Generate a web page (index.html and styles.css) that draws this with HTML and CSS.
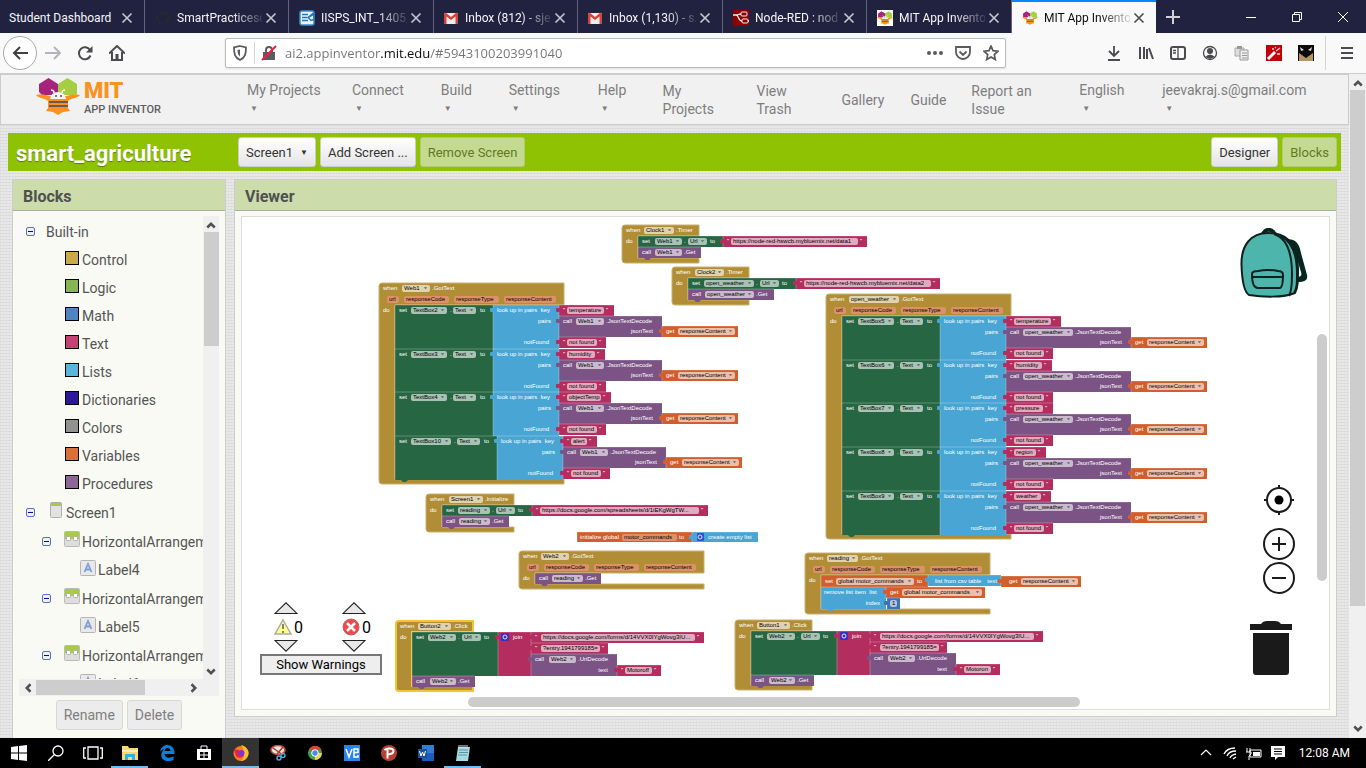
FILE: index.html
```html
<!DOCTYPE html>
<html lang="en">
<head>
<meta charset="utf-8">
<title>MIT App Inventor</title>
<link rel="stylesheet" href="styles.css">
</head>
<body>
<svg class="defs" aria-hidden="true">
  <symbol id="x" viewBox="0 0 12 12"><path d="M1.500 1.500l9 9m0-9l-9 9" fill="none" stroke="currentColor" stroke-width="1.600"/></symbol>
  <symbol id="gmail" viewBox="0 0 14 12"><path d="M0 1h14v11H0z" fill="#eee"/><path d="M0 1.500V12h2.500V4.500L7 8l4.500-3.500V12H14V1.500L12.500 .5 7 5 1.500 .5z" fill="#d54436"/></symbol>
  <symbol id="bee" viewBox="0 0 44 37"><path d="M3 6l9.500-6L22 6v11H6l-3-3z" fill="#a5237c"/><path d="M22 6l9.500-6L41 6v10l-4 1H22z" fill="#a6ce42"/><path d="M0 17c7-2 9 0 14 1h16c5-1 7-3 14-1-3 4-7 2-12 6H12C7 19 3 21 0 17z" fill="#f7931e"/><path d="M12 20h20v10l2 3-7 1-5 3-5-3-7-1 2-3z" fill="#f7931e"/><path d="M13 23h19v2H13zm0 4h19v2H13z" fill="#675b57"/><path d="M14 21a8 7 0 0 1 16 0z" fill="#f4f4f4"/><path d="M18 15q0-3-3-3m11 3q0-3 3-3" fill="none" stroke="#fff" stroke-width="1.500"/><circle cx="20" cy="18" r="1" fill="#555"/><circle cx="25" cy="18" r="1" fill="#555"/></symbol>
  <symbol id="minus" viewBox="0 0 9 9"><rect x=".5" y=".5" width="8" height="8" rx="1.500" fill="#eef1fb" stroke="#5b70bd"/><path d="M2 4.500h5" stroke="#0a0a8c"/></symbol>
  <symbol id="harr" viewBox="0 0 16 16"><rect x=".5" y=".5" width="15" height="15" rx="1" fill="#ddd" stroke="#bbb"/><path d="M1 1h14v7H1z" fill="#a9cb44"/><rect x="2.500" y="5.500" width="4" height="4" rx="1" fill="#fff" stroke="#aaa"/><rect x="9.500" y="5.500" width="4" height="4" rx="1" fill="#fff" stroke="#aaa"/></symbol>
  <symbol id="lab" viewBox="0 0 16 16"><rect x=".5" y=".5" width="15" height="15" rx="1" fill="#e8e8ea" stroke="#b5b5b5"/><path d="M4.500 12L8 4l3.500 8M6 9.500h4" fill="none" stroke="#7d9fd3" stroke-width="1.800"/></symbol>
  <symbol id="up" viewBox="0 0 8 6"><path d="M1 5l3-3 3 3" fill="none" stroke="#505050" stroke-width="2"/></symbol>
</svg>

<header class="tabs">
  <div class="tab"><button class="tab-name">Student Dashboard</button><button class="close" aria-label="Close tab"><svg><use href="#x"/></svg></button></div>
  <div class="tab"><svg class="fav" viewBox="0 0 16 16"><path d="M8 1a7 7 0 0 0-2 13.700V12c-2 .3-2-1-3-1.500 1-.3 1.500 1 2.500 1 .3-.7.500-1 .8-1.200C3 9.500 3.500 5.500 4.500 5l.2-2 2 1h2.600l2-1 .2 2c1.500 1 1.500 4.700-1.800 5.300.3.400.5 1 .5 2v2.400A7 7 0 0 0 8 1z" fill="#24292e"/></svg><button class="tab-name fade">SmartPracticesc</button><button class="close" aria-label="Close tab"><svg><use href="#x"/></svg></button></div>
  <div class="tab"><svg class="fav" viewBox="0 0 16 16"><rect x="1" y="1" width="14" height="14" rx="2" fill="#e9f5fd" stroke="#3b8bc8" stroke-width="1.500"/><path d="M3 4.500h6M3 7.500h5M3 10.500h6m0-3l6-5m-6 5l3 3 3-1V4z" stroke="#2776b8" stroke-width="1.500" fill="none"/></svg><button class="tab-name fade">IISPS_INT_1405_S</button><button class="close" aria-label="Close tab"><svg><use href="#x"/></svg></button></div>
  <div class="tab"><svg class="fav mail"><use href="#gmail"/></svg><button class="tab-name fade">Inbox (812) - sje</button><button class="close" aria-label="Close tab"><svg><use href="#x"/></svg></button></div>
  <div class="tab"><svg class="fav mail"><use href="#gmail"/></svg><button class="tab-name fade">Inbox (1,130) - s.</button><button class="close" aria-label="Close tab"><svg><use href="#x"/></svg></button></div>
  <div class="tab"><svg class="fav" viewBox="0 0 16 16"><path d="M0 0h16v16H0z" fill="#8f0000"/><path d="M0 5h3c3 0 2 6 6 6h7M3 5c3 0 2-1 5-1" fill="none" stroke="#eee" stroke-width="1.300"/><rect x="8" y="2" width="6" height="4" rx="1" fill="none" stroke="#eee"/><rect x="9" y="9" width="6" height="4" rx="1" fill="#8f0000" stroke="#eee"/></svg><button class="tab-name fade">Node-RED : nod</button><button class="close" aria-label="Close tab"><svg><use href="#x"/></svg></button></div>
  <div class="tab"><svg class="fav white"><use href="#bee"/></svg><button class="tab-name fade">MIT App Invento</button><button class="close" aria-label="Close tab"><svg><use href="#x"/></svg></button></div>
  <div class="tab active"><svg class="fav"><use href="#bee"/></svg><button class="tab-name fade">MIT App Invento</button><button class="close" aria-label="Close tab"><svg><use href="#x"/></svg></button></div>
  <button class="new-tab" aria-label="New tab"><svg viewBox="0 0 14 14"><path d="M7 0v14M0 7h14" stroke="#d0d0d8" stroke-width="2"/></svg></button>
  <div class="win">
    <button aria-label="Minimize"><svg viewBox="0 0 10 10"><path d="M0 5.500h10" stroke="#fff"/></svg></button>
    <button aria-label="Restore"><svg viewBox="0 0 10 10"><path d="M.5 2.500h7v7h-7zM2.500 2V.5h7v7H8" fill="none" stroke="#fff"/></svg></button>
    <button aria-label="Close"><svg viewBox="0 0 10 10"><path d="M0 0l10 10M10 0L0 10" stroke="#fff"/></svg></button>
  </div>
</header>

<nav class="toolbar">
  <button class="round" aria-label="Back"><svg viewBox="0 0 16 16"><path d="M8 2L2 8l6 6M2 8h14" fill="none" stroke="#3f3f46" stroke-width="2"/></svg></button>
  <button class="tool" aria-label="Forward"><svg viewBox="0 0 16 16"><path d="M9 2l6 6-6 6M15 8H0" fill="none" stroke="#b5b5b8" stroke-width="2"/></svg></button>
  <button class="tool" aria-label="Reload"><svg viewBox="0 0 16 16"><path d="M13.500 10.500A6 6 0 1 1 13 5" fill="none" stroke="#4a4a4f" stroke-width="2"/><path d="M15.500 1v6.500H9z" fill="#4a4a4f"/></svg></button>
  <button class="tool" aria-label="Home"><svg viewBox="0 0 16 16"><path d="M0 8.500L8 1l8 7.500M3 7v8h10V7" fill="none" stroke="#4a4a4f" stroke-width="2"/><path d="M6.500 9h3v6h-3z" fill="#4a4a4f"/></svg></button>
  <div class="url">
    <svg viewBox="0 0 16 16"><path d="M8 1l6 1.500C14 9 13 13 8 15 3 13 2 9 2 2.500z" fill="none" stroke="#5a5a60" stroke-width="1.800"/><path d="M8 4.500v7C6 10 5.500 8 5.500 5z" fill="#5a5a60"/></svg>
    <i class="sep"></i>
    <svg viewBox="0 0 16 16"><path d="M2 7h12v8H2z" fill="#5a5a60"/><path d="M5 8V5a3 3 0 0 1 6 0v3" fill="none" stroke="#5a5a60" stroke-width="2"/><path d="M1 15L15 1" stroke="#ff1744" stroke-width="2"/></svg>
    <input type="text" aria-label="Address" value="ai2.appinventor.mit.edu/#5943100203991040">
    <button aria-label="Page actions"><svg viewBox="0 0 16 16"><circle cx="2" cy="8" r="2"/><circle cx="8" cy="8" r="2"/><circle cx="14" cy="8" r="2"/></svg></button>
    <button aria-label="Save to Pocket"><svg viewBox="0 0 16 16"><path d="M1 2h14v5a7 7 0 0 1-14 0zM4.500 6.500L8 10l3.500-3.500" fill="none" stroke="#5a5a60" stroke-width="1.800"/></svg></button>
    <button aria-label="Bookmark"><svg viewBox="0 0 16 16"><path d="M8 1l2 4.700 5 .5-3.700 3.400 1 5L8 12l-4.300 2.600 1-5L1 6.200l5-.5z" fill="none" stroke="#5a5a60" stroke-width="1.700"/></svg></button>
  </div>
  <div class="tools">
    <button class="tool" aria-label="Downloads"><svg viewBox="0 0 16 16"><path d="M8 1v10M3 6l5 5 5-5M2 15h12" fill="none" stroke="#4a4a4f" stroke-width="1.800"/></svg></button>
    <button class="tool" aria-label="Library"><svg viewBox="0 0 16 16"><path d="M2 2v12M6 2v12M9 4v10M11 3l4 11" fill="none" stroke="#4a4a4f" stroke-width="2"/></svg></button>
    <button class="tool" aria-label="Sidebars"><svg viewBox="0 0 16 16"><rect x="1" y="2" width="14" height="12" rx="2" fill="none" stroke="#4a4a4f" stroke-width="2"/><path d="M8 2v12M3 5.500h3M3 8h3" stroke="#4a4a4f" stroke-width="1.300"/></svg></button>
    <button class="tool" aria-label="Account"><svg viewBox="0 0 16 16"><circle cx="8" cy="8" r="6.500" fill="none" stroke="#4a4a4f" stroke-width="1.300"/><circle cx="8" cy="6" r="3"/><path d="M3 12q5-5 10 0l-5 2z"/></svg></button>
    <button class="tool" aria-label="Copy"><svg viewBox="0 0 16 16"><path d="M1 3h9v8H1z" fill="#ddd" stroke="#aaa"/><path d="M3 1h5v3H3z" fill="#999"/><path d="M6 5h8v10H6z" fill="#eee" stroke="#999"/><path d="M8 8h5M8 10.500h5M8 13h5" stroke="#999"/></svg></button>
    <button class="tool" aria-label="Wand"><svg viewBox="0 0 16 16"><path d="M0 0h16v16H0z" fill="#c4000a"/><path d="M2 14l7-7" stroke="#fff" stroke-width="3"/><path d="M10 6l4-3M6 4h2m3 5h3M9 3l1-1" stroke="#fcc" stroke-width="1.300"/></svg></button>
    <button class="tool" aria-label="Mask"><svg viewBox="0 0 16 16"><path d="M0 0h16v16H0z" fill="#0b0b0d"/><path d="M1 8l7 5 7-5v8H1z" fill="#b59463"/><path d="M2 2l4 3-3 1zm12 0l-4 3 3 1z" fill="#ddd"/></svg></button>
    <i class="sep tall"></i>
    <button class="tool" aria-label="Menu"><svg viewBox="0 0 16 16"><path d="M2 3h12M2 8h12M2 13h12" stroke="#4a4a4f" stroke-width="2"/></svg></button>
  </div>
</nav>

<main class="browser-view">
  <div class="page">
    <div class="topbar">
      <a href="#" class="logo"><svg viewBox="0 0 44 37"><use href="#bee"/></svg><span class="logo-text"><b>MIT</b><span>APP INVENTOR</span></span></a>
      <div class="menu">
        <button>My Projects<i>▼</i></button><button>Connect<i>▼</i></button><button>Build<i>▼</i></button><button>Settings<i>▼</i></button><button>Help<i>▼</i></button>
        <a href="#">My<br>Projects</a><a href="#">View<br>Trash</a><a href="#">Gallery</a><a href="#">Guide</a><a href="#">Report an<br>Issue</a>
        <button>English<i>▼</i></button><button>jeevakraj.s@gmail.com<i>▼</i></button>
      </div>
    </div>
    <div class="project-bar">
      <h1>smart_agriculture</h1>
      <div class="group"><button class="btn">Screen1 <i>▼</i></button><button class="btn">Add Screen ...</button><button class="btn off" disabled>Remove Screen</button></div>
      <div class="group end"><button class="btn">Designer</button><button class="btn off" disabled>Blocks</button></div>
    </div>
    <div class="columns">
      <section class="panel side">
        <h2>Blocks</h2>
        <div class="tree-wrap">
          <ul class="tree">
            <li class="root"><svg class="tog"><use href="#minus"/></svg>Built-in</li>
            <li class="leaf"><i class="sw control"></i>Control</li>
            <li class="leaf"><i class="sw logic"></i>Logic</li>
            <li class="leaf"><i class="sw math"></i>Math</li>
            <li class="leaf"><i class="sw text"></i>Text</li>
            <li class="leaf"><i class="sw lists"></i>Lists</li>
            <li class="leaf"><i class="sw dict"></i>Dictionaries</li>
            <li class="leaf"><i class="sw colors"></i>Colors</li>
            <li class="leaf"><i class="sw vars"></i>Variables</li>
            <li class="leaf"><i class="sw procs"></i>Procedures</li>
            <li class="root scr"><svg class="tog"><use href="#minus"/></svg><svg class="phone" viewBox="0 0 12 16"><rect x=".5" y=".5" width="11" height="15" rx="1" fill="#e2e2e2" stroke="#b0b0b0"/><path d="M1 1h10v3H1z" fill="#a9cb44"/></svg>Screen1</li>
            <li class="branch"><svg class="tog"><use href="#minus"/></svg><svg class="ico"><use href="#harr"/></svg>HorizontalArrangement1</li>
            <li class="sub"><svg class="ico"><use href="#lab"/></svg>Label4</li>
            <li class="branch"><svg class="tog"><use href="#minus"/></svg><svg class="ico"><use href="#harr"/></svg>HorizontalArrangement2</li>
            <li class="sub"><svg class="ico"><use href="#lab"/></svg>Label5</li>
            <li class="branch"><svg class="tog"><use href="#minus"/></svg><svg class="ico"><use href="#harr"/></svg>HorizontalArrangement3</li>
            <li class="sub"><svg class="ico"><use href="#lab"/></svg>Label6</li>
          </ul>
          <div class="vbar"><svg><use href="#up"/></svg><i></i><svg class="down"><use href="#up"/></svg></div>
          <div class="hbar"><svg class="left"><use href="#up"/></svg><i></i><svg class="right"><use href="#up"/></svg></div>
        </div>
        <div class="actions"><button class="btn dim" disabled>Rename</button><button class="btn dim" disabled>Delete</button></div>
      </section>
      <section class="panel viewer">
        <h2>Viewer</h2>
        <div class="workspace">
          <svg class="canvas" id="canvas" role="img" aria-label="Blocks workspace"></svg>
          <div class="warnings">
            <div class="counts">
              <div class="count"><svg class="tri" viewBox="0 0 22 11"><path d="M1 10.500L11 .8l10 9.700z" fill="#e8e8e8" stroke="#222"/></svg><span><svg viewBox="0 0 18 18"><path d="M9 2l8 14H1z" fill="#ffff88" stroke="#aaa" stroke-width="1.500"/><path d="M9 6v5m0 2v2" stroke="#777" stroke-width="1.800"/></svg>0</span><svg class="tri" viewBox="0 0 22 11"><path d="M1 .5l10 9.700L21 .5z" fill="#e8e8e8" stroke="#222"/></svg></div>
              <div class="count"><svg class="tri" viewBox="0 0 22 11"><path d="M1 10.500L11 .8l10 9.700z" fill="#e8e8e8" stroke="#222"/></svg><span><svg viewBox="0 0 18 18"><circle cx="9" cy="9" r="8" fill="#f0484c" stroke="#b66" /><path d="M5 5l8 8m0-8l-8 8" stroke="#fff" stroke-width="2.500"/></svg>0</span><svg class="tri" viewBox="0 0 22 11"><path d="M1 .5l10 9.700L21 .5z" fill="#e8e8e8" stroke="#222"/></svg></div>
            </div>
            <button class="show">Show Warnings</button>
          </div>
          <svg class="backpack" viewBox="0 0 68 70"><path d="M46 11c10 0 13 4 15 14l6 22c1 5-2 7-9 7l-1-5c4 0 5-1 4-5l-6-20c-1-4-4-7-8-7z" fill="#03291f"/><path d="M23 7c1-7 11-7 12 1" fill="none" stroke="#03291f" stroke-width="4"/><path d="M1.500 37C1 17 11 5 28 5c15 0 29 6 30 35 0 13 0 20-3 25-12 5-33 4-46 2-5-3-7-15-7.500-30z" fill="#4db5ab" stroke="#10201e" stroke-width="2"/><path d="M34 6c16 5 18 25 18 40 0 9 0 17-3 22M41 8c12 6 16 22 16 38 0 9 0 14-3 19" fill="none" stroke="#10201e" stroke-width="2"/><path d="M12 46q0-3 6-3 10-2 20 0 5 0 5 4 0 12-3 13H18c-4 0-6-4-6-14zm1 3h30" fill="none" stroke="#10201e" stroke-width="2"/></svg>
          <div class="controls">
            <button aria-label="Center workspace"><svg viewBox="0 0 32 32"><circle cx="16" cy="16" r="12" fill="none" stroke="#1a1a1a" stroke-width="2"/><circle cx="16" cy="16" r="4.500"/><path d="M16 1v4m0 22v4M1 16h4m22 0h4" stroke="#1a1a1a" stroke-width="2"/></svg></button>
            <button aria-label="Zoom in"><svg viewBox="0 0 32 32"><circle cx="16" cy="16" r="15" fill="none" stroke="#1a1a1a" stroke-width="2"/><path d="M9 16h14M16 9v14" stroke="#1a1a1a" stroke-width="2"/></svg></button>
            <button aria-label="Zoom out"><svg viewBox="0 0 32 32"><circle cx="16" cy="16" r="15" fill="none" stroke="#1a1a1a" stroke-width="2"/><path d="M9 16h14" stroke="#1a1a1a" stroke-width="2"/></svg></button>
          </div>
          <svg class="trash" viewBox="0 0 42 54"><path d="M0 3h11q2-3 6-3h8q4 0 6 3h11v6H0zM3 12h36v39q0 3-3 3H6q-3 0-3-3z" fill="#1a1a1a"/></svg>
          <i class="ws-v"></i><i class="ws-h"></i>
        </div>
      </section>
    </div>
  </div>
  <div class="vbar main"><svg><use href="#up"/></svg><i></i><svg class="down"><use href="#up"/></svg></div>
</main>

<footer class="taskbar">
  <button aria-label="Start"><svg viewBox="0 0 16 16"><path d="M0 2l7-1v6.500H0zm8-1l8-1v7.500H8zM0 8.500h7V15l-7-1zm8 0h8V16l-8-1z" fill="#fff"/></svg></button>
  <button aria-label="Search"><svg viewBox="0 0 16 16"><circle cx="10" cy="6" r="5" fill="none" stroke="#fff" stroke-width="1.300"/><path d="M6.500 9.500L0 16" stroke="#fff" stroke-width="1.300"/></svg></button>
  <button aria-label="Task view"><svg class="wide" viewBox="0 0 20 16"><path d="M5 2h10v12H5zM3 3H.7v10H3m14-10h2.300v10H17" fill="none" stroke="#fff" stroke-width="1.300"/></svg></button>
  <button class="open" aria-label="File Explorer"><svg viewBox="0 0 16 16"><path d="M0 1h6l1 2h9v12H0z" fill="#fbd872"/><path d="M0 5h16v2H0z" fill="#fff0b0"/><path d="M3 9h10v6h-3v-3H6v3H3z" fill="#27b3ee"/></svg></button>
  <button aria-label="Edge"><svg viewBox="0 0 16 16"><path d="M1 7C2 2 5 0 8 0c5 0 8 4 7.500 9H5.500c.5 4 5 4.500 9 2.500V15C7 18 1 14 2.500 8.500 3 6 5 4 7 4 4 4 2 5 1 7zm4.500-1h6c0-4-5.500-4-6 0z" fill="#0a7fdb"/></svg></button>
  <button aria-label="Store"><svg viewBox="0 0 16 16"><path d="M1 4h14v11H1z" fill="#fff"/><path d="M5 4V1h6v3" fill="none" stroke="#fff"/><path d="M4 7h3.500v2.500H4zm4.500 0H12v2.500H8.500zM4 10.500h3.500V13H4zm4.500 0H12V13H8.500z"/></svg></button>
  <button class="open current" aria-label="Firefox"><svg viewBox="0 0 16 16"><circle cx="8" cy="8.500" r="7.500" fill="#ff7a1a"/><path d="M8 0c5 1 8 5 7.500 9-1 5-5 7-8 7 4-2 4-6 2-9 2-2 0-5-1.500-7z" fill="#ffbd2e"/><path d="M1 5c3-1 5 0 6 1l4 3c0 4-6 5-8 2z" fill="#e3224e"/><circle cx="8.500" cy="8" r="3" fill="#7a36d2"/></svg></button>
  <button aria-label="Snipping Tool"><svg viewBox="0 0 16 16"><ellipse cx="8" cy="5" rx="7" ry="4.500" fill="#e6e6e6" stroke="#c54d34" stroke-width="1.600"/><path d="M3 3l10 7M13 2L7 9" stroke="#b53926" stroke-width="1.500"/><circle cx="9" cy="13" r="2" fill="none" stroke="#55a9df" stroke-width="1.400"/><circle cx="13" cy="10.500" r="2" fill="none" stroke="#55a9df" stroke-width="1.400"/></svg></button>
  <button aria-label="Chrome"><svg viewBox="0 0 16 16"><circle cx="8" cy="8" r="7" fill="#3ca553"/><path d="M8 8L2 4.500a7 7 0 0 1 12.500.5H8z" fill="#e04435"/><path d="M8 8h6.800A7 7 0 0 1 8 15z" fill="#fbd14a"/><circle cx="8" cy="8" r="3.300" fill="#4a86e8" stroke="#fff"/></svg></button>
  <button aria-label="Viewer"><svg viewBox="0 0 16 16"><path d="M0 0h16v16H0z" fill="#2a84ea"/><path d="M2 4l3 8 3-8M9.500 7.500H14V4h-4v8h4v-2" fill="none" stroke="#fff" stroke-width="1.500"/></svg></button>
  <button aria-label="Publisher"><svg viewBox="0 0 16 16"><circle cx="8" cy="8" r="8" fill="#b8422f"/><path d="M6.500 13.500V4M3.500 5c2-2 9-2.500 9 1 0 3-4 3.500-6 3" fill="none" stroke="#fff" stroke-width="2"/></svg></button>
  <button aria-label="Word"><svg viewBox="0 0 16 16"><path d="M4 0h12v16H4z" fill="#2f7fd6"/><path d="M4 8h12v8H4z" fill="#1b5cbe"/><path d="M0 4h9v9H0z" fill="#1c4f9f"/><path d="M1.500 6l1.500 5 1.500-4L6 11l1.500-5" fill="none" stroke="#fff"/></svg></button>
  <button class="open" aria-label="Notepad"><svg viewBox="0 0 16 16"><path d="M3 2h12l-2 14H1z" fill="#a7dbe3"/><path d="M4 5h9M4 7.500h9M3 10h9" stroke="#5b95a5"/><path d="M4 0v3m2-3v3m2-3v3m2-3v3m2-3v3" stroke="#ddd"/></svg></button>
  <div class="tray">
    <svg viewBox="0 0 16 16"><path d="M3 10l5-5 5 5" fill="none" stroke="#fff" stroke-width="1.200"/></svg>
    <svg viewBox="0 0 16 16"><path d="M2 9q3-6 11-6M5 11q2-5 9-5M8 13q1-3 6-4M11 14l3-2" fill="none" stroke="#fff" stroke-width="1.300"/></svg>
    <svg viewBox="0 0 16 16"><path d="M4 5h11v7H4z" fill="none" stroke="#fff"/><path d="M7 7h7v4H7z" fill="#fff"/><path d="M1 3v4m3-4v4M0 7h5v2L3 11v4" fill="none" stroke="#fff"/></svg>
    <svg viewBox="0 0 16 16"><path d="M1 1h14v11H8l-3 3v-3H1z" fill="#fff"/><path d="M4 4h8M4 6.500h8M4 9h8" stroke="#000"/></svg>
    <time>12:08 AM</time>
  </div>
</footer>
<script src="blocks.js"></script>
</body>
</html>
```
FILE: styles.css
```css
* { box-sizing: border-box; }
html, body { height: 100%; margin: 0; }
body { display: flex; flex-direction: column; overflow: hidden; font-family: Roboto, "Liberation Sans", sans-serif; background: #e9e9e9; }
button { border: 0; padding: 0; margin: 0; background: none; font: inherit; color: inherit; display: flex; align-items: center; justify-content: center; }
a { color: inherit; text-decoration: none; }
i { font-style: normal; }
svg { display: block; flex: none; }
.defs { display: none; }

.tabs { display: flex; flex: none; height: 33px; background: #20223f; color: #f5f5fa; font: 12px Roboto, "Noto Sans", sans-serif; }
.tab { display: flex; align-items: center; flex: 0 1 144px; min-width: 0; height: 33px; padding: 2px 10px 0 9px; border-right: 1px solid #62647c; }
.tab:nth-child(2n+1) { flex-basis: 145px; }
.tab .fav { width: 16px; height: 16px; margin: 0 6px 0 1px; }
.tab .mail { width: 14px; height: 12px; margin-right: 7px; }
.tab .white { background: #fff; }
.tab-name { flex: 1; min-width: 0; white-space: nowrap; justify-content: flex-start; }
.fade { -webkit-mask-image: linear-gradient(90deg, #000 65%, transparent 105%); mask-image: linear-gradient(90deg, #000 65%, transparent 105%); }
.close { width: 14px; height: 14px; color: #c8c8d2; margin-left: 2px; }
.close svg { width: 12px; height: 12px; }
.tab.active { background: #f9f9fa; color: #0c0c0d; border: 0; border-top: 2px solid #0a84ff; padding-top: 0; }
.active .close { color: #4a4a4f; }
.new-tab { width: 34px; }
.new-tab svg { width: 14px; height: 14px; }
.win { display: flex; margin-left: auto; }
.win button { width: 46px; }
.win svg { width: 10px; height: 10px; }

.toolbar { display: flex; align-items: center; flex: none; height: 41px; padding: 0 3px; background: #f9f9fa; border-bottom: 1px solid #ccc; }
.round { width: 34px; height: 34px; border: 1px solid #aaa; border-radius: 50%; background: #fff; }
.toolbar svg { width: 16px; height: 16px; }
.tool { width: 32px; height: 32px; fill: #4a4a4f; }
.url { display: flex; align-items: center; gap: 12px; flex: 0 1 781px; height: 30px; margin-left: 92px; padding: 0 6px; border: 1px solid #bbb; border-radius: 2px; background: #fff; box-shadow: 0 1px 2px #ddd; fill: #5a5a60; }
.url .sep { margin: 0 -6px; }
.sep { width: 1px; height: 22px; background: #d4d4d6; }
.url input { flex: 1; min-width: 0; border: 0; padding: 0; margin-left: -4px; outline: 0; font: 13px/20px "Open Sans", "Noto Sans", sans-serif; color: transparent; background: linear-gradient(90deg, #737373 95px, #0c0c0d 95px 145px, #737373 145px); -webkit-background-clip: text; background-clip: text; }
.tools { display: flex; align-items: center; margin-left: auto; }
.tall { height: 34px; margin: 0 5px 0 3px; }

.browser-view { display: flex; flex: 1; min-height: 0; }
.page { display: flex; flex-direction: column; flex: 1; min-width: 0; background-color: #e9e9e9; background-image: repeating-linear-gradient(0deg, #dcdcdc 0 1px, transparent 1px 3px), repeating-linear-gradient(90deg, #e2e2e2 0 1px, transparent 1px 3px); }
.topbar { display: flex; flex: none; height: 51px; border: 1px solid #ccc; background: #f1f1f1; color: #7e7e7e; }
.logo { display: flex; gap: 4px; flex: none; width: 246px; padding: 3px 0 0 35px; }
.logo svg { width: 44px; height: 37px; }
.logo-text { display: flex; flex-direction: column; font: 500 11px/14px Roboto, sans-serif; color: #5e5e5e; padding-top: 1px; }
.logo-text b { font: 900 22px/24px Roboto, sans-serif; color: #f7931e; }
.menu { display: grid; flex: 1; grid-template-columns: 105fr 89fr 68fr 89fr 65fr 94fr 85fr 69fr 61fr 108fr 83fr 186fr; font-size: 14px; line-height: 18px; align-items: center; }
.menu button { display: block; text-align: left; white-space: nowrap; }
.menu button i { display: block; font-size: 8px; padding-left: 3px; line-height: 20px; }

.project-bar { display: flex; align-items: center; flex: none; height: 38px; margin: 8px 8px 0; padding: 0 4px 0 8px; background: #8fc202; }
h1 { margin: 4px 0 0; width: 222px; font-size: 22px; line-height: 26px; color: #fff; text-shadow: 0 1px 1px #5c7a10; }
.group { display: flex; gap: 4px; }
.end { margin-left: auto; }
.btn { height: 30px; padding: 0 7px; border: 1px solid #ccc; border-radius: 3px; background: linear-gradient(#fff, #e4e4e4); color: #333; font-size: 13px; white-space: nowrap; }
.btn i { font-size: 8px; margin-left: 7px; }
.btn.off { background: #c5da91; border-color: #b3cc74; color: #5f7a22; }
.btn.dim { background: #ececec; border-color: #d8d8d8; color: #7f7f7f; font-size: 14px; }

.columns { display: flex; align-items: flex-start; gap: 8px; flex: 1; min-height: 0; padding: 8px 12px 0; }
.panel { display: flex; flex-direction: column; background: #f8faf3; border: 1px solid #ccc; }
h2 { flex: none; margin: 0; height: 31px; padding: 2px 10px 0; font-size: 16px; line-height: 29px; color: #505050; background: #ccdcaa; border-bottom: 1px solid #aaa; }
.side { flex: none; width: 214px; height: calc(100% + 10px); }
.viewer { flex: 1; min-width: 0; height: calc(100% - 21px); }
.tree-wrap { display: grid; grid-template: 463px 17px / 184px 16px; margin: 5px 6px 0; }
.tree { margin: 0; padding: 1px 0 0; overflow: hidden; list-style: none; font-size: 14px; color: #555; }
.tree li { display: flex; align-items: center; height: 28px; white-space: nowrap; }
.tree .root { padding-left: 7px; height: 29px; }
.tree .leaf { padding-left: 46px; }
.tree .branch { padding-left: 23px; height: 29px; }
.tree .sub { padding-left: 61px; }
.tog { width: 9px; height: 9px; margin-right: 11px; }
.root.scr .tog { margin-right: 15px; }
.branch .tog { margin-right: 13px; }
.phone { width: 12px; height: 16px; margin: 0 4px 5px 0; }
.ico { width: 16px; height: 16px; margin: 0 2px 5px 0; }
.sw { width: 14px; height: 14px; border: 1px solid #000; margin: 0 3px 5px 0; }
.control { background: #cdaa49; } .logic { background: #88b554; } .math { background: #4f85c2; } .text { background: #c44370; } .lists { background: #5bb4dc; } .dict { background: #2d1799; } .colors { background: #929292; } .vars { background: #d97139; } .procs { background: #8c6798; }
.vbar, .hbar { display: flex; align-items: center; background: #f0f0f0; }
.vbar { flex-direction: column; grid-row: span 2; width: 17px; padding: 5px 0; }
.vbar svg, .hbar svg { width: 10px; height: 8px; }
.vbar i { width: 15px; height: 114px; background: #cdcdcd; margin-top: 3px; }
.tree-wrap .vbar { width: 16px; }
.vbar .down { transform: rotate(180deg); margin-top: auto; margin-bottom: 15px; }
.hbar { padding: 0 4px; }
.hbar i { width: 109px; height: 15px; background: #cdcdcd; margin-left: 3px; }
.hbar .left { transform: rotate(-90deg); }
.hbar .right { transform: rotate(90deg); margin-left: auto; }
.vbar.main { flex: none; }
.vbar.main i { height: 516px; }
.vbar.main .down { margin-bottom: 0; }
.actions { display: flex; justify-content: center; gap: 4px; margin: 4px 0 0; }

.workspace { position: relative; flex: 1; margin: 5px 6px 6px; border: 1px solid #ddd; background: #fff; overflow: hidden; }
.canvas { width: 100%; height: 100%; font: 6px "Liberation Sans", sans-serif; }
.canvas text { white-space: pre; stroke-width: 0; }
.canvas .lb { fill: #fff; }
.canvas .fd { fill: #000; }
.warnings { position: absolute; left: 18px; bottom: 34px; width: 122px; }
.counts { display: flex; justify-content: space-between; padding: 0 11px 0 14px; }
.count { display: flex; flex-direction: column; }
.count span { display: flex; align-items: center; gap: 2px; height: 26px; font-size: 16px; color: #000; }
.count span svg { width: 18px; height: 18px; }
.tri { width: 24px; height: 12px; }
.show { width: 100%; height: 21px; border: 2px solid #777; background: #eee; color: #000; font-size: 13px; margin-top: 2px; }
.backpack { position: absolute; right: 21px; top: 11px; width: 68px; height: 70px; }
.controls { position: absolute; right: 34px; bottom: 115px; display: flex; flex-direction: column; gap: 2px; }
.controls button:first-child { margin-bottom: 10px; }
.controls svg { width: 32px; height: 32px; }
.trash { position: absolute; right: 37px; bottom: 34px; width: 42px; height: 54px; }
.ws-v { position: absolute; right: 2px; top: 117px; width: 10px; height: 247px; border-radius: 5px; background: #ccc; }
.ws-h { position: absolute; left: 226px; bottom: 2px; width: 612px; height: 10px; border-radius: 5px; background: #ccc; }

.taskbar { display: flex; flex: none; height: 30px; background: #000; color: #fff; }
.taskbar button { width: 37px; }
.taskbar > button svg { width: 16px; height: 16px; }
.taskbar > button .wide { width: 20px; }
.taskbar .open { box-shadow: inset 0 -2px #76b9ed; }
.taskbar .current { background: #333; }
.tray { display: flex; align-items: center; gap: 8px; margin-left: auto; padding-right: 16px; }
.tray svg { width: 16px; height: 16px; }
.tray time { margin-left: 5px; font: 12px Roboto, sans-serif; white-space: nowrap; }
```
FILE: blocks.js
```js
// Draws the block stacks. Coordinates are in workspace units; `scroll` is the current pan.
const NS = 'http://www.w3.org/2000/svg';
const scroll = { x: 242, y: 217 };
const GOLD = '#b18e35', GREEN = '#266643', BLUE = '#49a6d4', PINK = '#b32d5e', PURPLE = '#7c5385', ORANGE = '#d05f2d', NUM = '#3f71b5';
const TINT = { [GOLD]: '#e0d2ae', [GREEN]: '#a8c2b4', [PINK]: '#e0abbf', [PURPLE]: '#cbbace', [ORANGE]: '#ecbfab', [NUM]: '#b2c6e1' };

const root = document.getElementById('canvas').appendChild(document.createElementNS(NS, 'g'));
root.setAttribute('transform', `translate(${-scroll.x} ${-scroll.y})`);

function el(name, attrs, text) {
  const node = document.createElementNS(NS, name);
  for (const key in attrs) node.setAttribute(key, attrs[key]);
  if (text) node.textContent = text;
  return root.appendChild(node);
}
const label = (text, x, y, anchor = 'start') => el('text', { x, y: y + 2, class: 'lb', 'text-anchor': anchor }, text);
function field(text, x, end, y, color, arrow = true) {
  el('rect', { x, y: y - 3, width: end - x, height: 7, rx: 2, fill: color });
  el('text', { x: x + 2, y: y + 2, class: 'fd' }, text);
  if (arrow) el('path', { d: `M${end - 6} ${y - 1}h3l-1 2h-1z`, fill: '#444', 'fill-opacity': .6 });
}
function shape(x, y, end, bottom, color) {
  el('path', { d: `M${x} ${y}H${end}V${bottom}H${x}z`, fill: color });
  el('path', { d: `M${x} ${bottom}V${y}H${end}`, fill: 'none', stroke: '#fff', 'stroke-opacity': .25 });
}
function statement(x, y, end, bottom, color) {
  shape(x, y, end, bottom, color);
  el('path', { d: `M${x + 6} ${bottom}h7l-2 2h-3z`, fill: color });
}
function value(x, y, end, bottom, color) {
  shape(x, y, end, bottom, color);
  el('rect', { x: x - 3, y: y + 3, width: 4, height: 4, rx: 1, fill: color });
}
function string(text, x, y, fieldEnd, end, pad = 8) {
  value(x, y, end, y + 11, PINK);
  label('"', x + 4, y + 5);
  field(text, x + pad, fieldEnd, y + 5, TINT[PINK], false);
  label('"', fieldEnd + 2, y + 5);
}
function event(x, y, end, bottom, name, nameX, nameEnd, kind, params, selected) {
  const head = params ? 22 : 11;
  el('path', {
    d: `M${x + 3} ${y}H${end}V${y + head}H${x + 16}V${bottom - 5}H${end}V${bottom}H${x + 3}q-3 0-3-3V${y + 3}q0-3 3-3z`,
    fill: GOLD, stroke: selected ? '#f5c430' : '#c9b070', 'stroke-width': selected ? 2 : 1
  });
  label('when', x + 4, y + 5);
  field(name, nameX, nameEnd, y + 5, TINT[GOLD]);
  label(kind, nameEnd + 2, y + 5);
  label('do', x + 4, y + head + 5);
  if (params) {
    [['url', 8, 20], ['responseCode', 25, 70], ['responseType', 75, 120], ['responseContent', 125, 177]]
      .forEach(([t, a, b]) => field(t, x + a, x + b, y + 16, '#de9169', false));
  }
}
function setUrl(x, y, end, comp, compX, compEnd, bottom = y + 11) {
  statement(x, y, end, bottom, GREEN);
  label('set', x + 4, y + 5);
  field(comp, compX, compEnd, y + 5, TINT[GREEN]);
  label('.', compEnd + 2, y + 5);
  field('Url', compEnd + 6, compEnd + 25, y + 5, TINT[GREEN]);
  label('to', compEnd + 28, y + 5);
}
function callGet(x, y, end, comp, compX, compEnd) {
  statement(x, y, end, y + 11, PURPLE);
  label('call', x + 4, y + 5);
  field(comp, compX, compEnd, y + 5, TINT[PURPLE]);
  label('.Get', compEnd + 2, y + 5);
}
function getVar(x, y, end, name, gap = 4) {
  value(x, y, end, y + 11, ORANGE);
  label('get', x + gap, y + 5);
  field(name, x + gap + 12, end - 3, y + 5, TINT[ORANGE]);
}
// set TextBox.Text to (look up in pairs ...)
function lookup(x, y, box, boxWidth, comp, compWidth, key, keyWidth) {
  const b = x + 62 + boxWidth, k = b + 66, c = k + 17 + compWidth;
  statement(x, y, b, y + 44, GREEN);
  label('set', x + 4, y + 5);
  field(box, x + 16, x + 16 + boxWidth, y + 5, TINT[GREEN]);
  label('.', b - 43, y + 5);
  field('Text', b - 40, b - 17, y + 5, TINT[GREEN]);
  label('to', b - 13, y + 5);
  value(b, y, k, y + 44, BLUE);
  label('look up in pairs  key', b + 4, y + 5);
  label('pairs', k - 8, y + 16, 'end');
  label('notFound', k - 10, y + 37, 'end');
  string(key, k, y, k + 8 + keyWidth, k + keyWidth + 18);
  value(k, y + 11, c + 58, y + 32, PURPLE);
  label('call', k + 4, y + 16);
  field(comp, k + 17, c, y + 16, TINT[PURPLE]);
  label('.JsonTextDecode', c + 2, y + 16);
  label('jsonText', c + 49, y + 26, 'end');
  getVar(c + 58, y + 21, c + 134, 'responseContent');
  string('not found', k, y + 32, k + 38, k + 47);
}
function click(x, y, name, word, selected) {
  event(x, y, x + 77, y + 70, name, x + 22, x + 55, '.Click', false, selected);
  setUrl(x + 16, y + 11, x + 102, 'Web2', x + 32, x + 60, y + 55);
  value(x + 102, y + 11, x + 135, y + 55, PINK);
  el('rect', { x: x + 105, y: y + 12, width: 8, height: 8, rx: 1, fill: '#3f2fc0' });
  el('circle', { cx: x + 109, cy: y + 16, r: 2, fill: 'none', stroke: '#ddd' });
  label('join', x + 117, y + 16);
  string('https://docs.google.com/forms/d/14VVX0IYgWovg3IU...', x + 135, y + 11, x + 299, x + 308, 10);
  string('?entry.1941799185=', x + 135, y + 22, x + 204, x + 212, 10);
  value(x + 135, y + 33, x + 221, y + 55, PURPLE);
  label('call', x + 139, y + 38);
  field('Web2', x + 153, x + 180, y + 38, TINT[PURPLE]);
  label('.UriDecode', x + 182, y + 38);
  label('text', x + 212, y + 49, 'end');
  string(word, x + 221, y + 44, x + 256, x + 265);
  callGet(x + 16, y + 55, x + 79, 'Web2', x + 34, x + 60);
}

event(622, 225, 699, 263, 'Clock1', 644, 674, '.Timer');
setUrl(638, 236, 723, 'Web1', 655, 682);
string('https://node-red-hswcb.mybluemix.net/data1', 723, 236, 858, 867);
callGet(638, 247, 701, 'Web1', 655, 682);

event(672, 267, 749, 305, 'Clock2', 695, 724, '.Timer');
setUrl(688, 278, 796, 'open_weather', 704, 754);
string('https://node-red-hswcb.mybluemix.net/data2', 796, 278, 931, 940);
callGet(688, 289, 774, 'open_weather', 705, 754);

const rows = [0, 44, 87, 131, 175];
event(379, 283, 564, 484, 'Web1', 402, 430, '.GotText', true);
[['TextBox2', 36, 'temperature', 37], ['TextBox3', 36, 'humidity', 28], ['TextBox4', 36, 'objectTemp', 34], ['TextBox10', 40, 'alert', 16]]
  .forEach(([box, w, key, kw], i) => lookup(395, 305 + rows[i], box, w, 'Web1', 28, key, kw));

event(826, 294, 1011, 539, 'open_weather', 849, 899, '.GotText', true);
[['TextBox5', 'temperature', 37], ['TextBox6', 'humidity', 28], ['TextBox7', 'pressure', 29], ['TextBox8', 'region', 22], ['TextBox9', 'weather', 27]]
  .forEach(([box, key, kw], i) => lookup(842, 316 + rows[i], box, 36, 'open_weather', 50, key, kw));

event(426, 494, 514, 532, 'Screen1', 449, 483, '.Initialize');
setUrl(442, 505, 532, 'reading', 458, 490);
string('https://docs.google.com/spreadsheets/d/1iEKgWgTW...', 532, 505, 699, 708);
callGet(442, 516, 509, 'reading', 459, 490);

shape(577, 532, 692, 542, ORANGE);
label('initialize global', 580, 537);
field('motor_commands', 622, 677, 537, '#de9169', false);
label('to', 679, 537);
value(692, 532, 758, 542, BLUE);
el('rect', { x: 697, y: 533, width: 7, height: 8, rx: 1, fill: '#2b52dc' });
el('circle', { cx: 700, cy: 537, r: 2, fill: 'none', stroke: '#ddd' });
label('create empty list', 708, 537);

event(519, 551, 704, 589, 'Web2', 541, 569, '.GotText', true);
callGet(535, 573, 601, 'reading', 552, 583);

event(805, 553, 990, 614, 'reading', 827, 858, '.GotText', true);
statement(821, 575, 928, 587, ORANGE);
label('set', 825, 581);
field('global motor_commands', 836, 914, 581, TINT[ORANGE]);
label('to', 917, 581);
value(928, 575, 1001, 586, BLUE);
label('list from csv table', 935, 581);
label('text', 997, 581, 'end');
getVar(1001, 576, 1081, 'responseContent', 8);
statement(821, 587, 886, 609, BLUE);
label('remove list item  list', 824, 592);
label('index', 880, 603, 'end');
getVar(886, 587, 985, 'global motor_commands');
value(887, 598, 900, 609, NUM);
field('1', 890, 897, 603, TINT[NUM], false);

click(396, 621, 'Button2', 'Motoroff', true);
click(735, 620, 'Button1', 'Motoron', false);
```
